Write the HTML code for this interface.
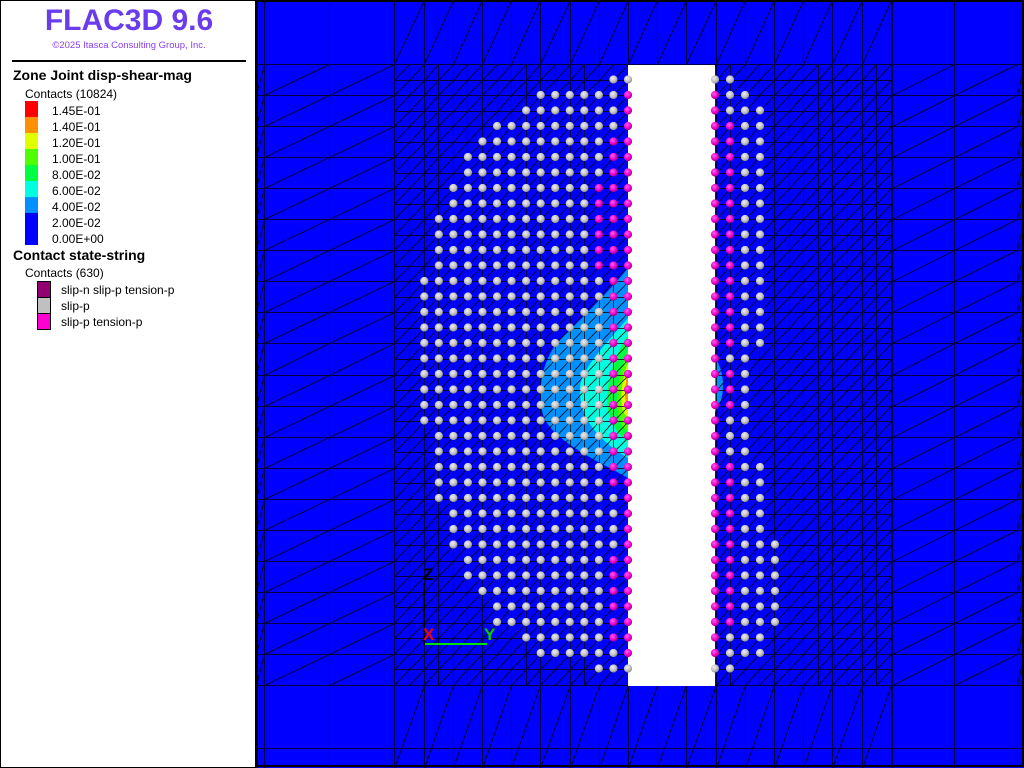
<!DOCTYPE html>
<html><head><meta charset="utf-8"><style>
html,body{margin:0;padding:0;width:1024px;height:768px;overflow:hidden;background:#fff;font-family:"Liberation Sans",sans-serif}
#panel{position:absolute;left:0;top:0;width:256px;height:768px;background:#fff;border:1px solid #000;box-sizing:border-box}
.t{position:absolute;white-space:nowrap;color:#000}
.sw{position:absolute;left:24px;width:13px;height:16px}
.sb{position:absolute;left:36px;width:12px;height:15px;border:1px solid #000}
#vp{position:absolute;left:256px;top:0}
</style></head><body>
<div id="panel">
<div class="t" style="left:0;width:256px;text-align:center;top:3px;font-size:30px;font-weight:bold;color:#6a3cf0;font-family:'Liberation Sans',sans-serif">FLAC3D 9.6</div>
<div class="t" style="left:0;width:256px;text-align:center;top:39px;font-size:9.5px;color:#8a40f0">©2025 Itasca Consulting Group, Inc.</div>
<div style="position:absolute;left:11px;top:59px;width:234px;height:2px;background:#000"></div>
<div class="t" style="left:12px;top:66px;font-size:14px;font-weight:bold">Zone Joint disp-shear-mag</div>
<div class="t" style="left:24px;top:86px;font-size:12px">Contacts (10824)</div>
<div class="sw" style="top:100px;background:#ff0000"></div>
<div class="sw" style="top:116px;background:#ff9000"></div>
<div class="sw" style="top:132px;background:#e0ff00"></div>
<div class="sw" style="top:148px;background:#50ff00"></div>
<div class="sw" style="top:164px;background:#00ff40"></div>
<div class="sw" style="top:180px;background:#00ffe0"></div>
<div class="sw" style="top:196px;background:#0090ff"></div>
<div class="sw" style="top:212px;background:#0000ff;height:32px"></div>
<div class="t" style="left:51px;top:102px;font-size:12px;line-height:16px">1.45E-01<br>1.40E-01<br>1.20E-01<br>1.00E-01<br>8.00E-02<br>6.00E-02<br>4.00E-02<br>2.00E-02<br>0.00E+00</div>
<div class="t" style="left:12px;top:246px;font-size:14px;font-weight:bold">Contact state-string</div>
<div class="t" style="left:24px;top:265px;font-size:12px">Contacts (630)</div>
<div class="sb" style="top:280px;background:#900070"></div>
<div class="sb" style="top:296px;background:#c0c0c0"></div>
<div class="sb" style="top:312px;background:#ff00d0"></div>
<div class="t" style="left:60px;top:281px;font-size:12px;line-height:16px">slip-n slip-p tension-p<br>slip-p<br>slip-p tension-p</div>
</div>
<svg id="vp" width="768" height="768" xmlns="http://www.w3.org/2000/svg">
<defs>
<radialGradient id="g" cx="0.4" cy="0.35" r="0.7"><stop offset="0" stop-color="#eeeeee"/><stop offset="0.6" stop-color="#c0c0c0"/><stop offset="1" stop-color="#808080"/></radialGradient>
<radialGradient id="m" cx="0.4" cy="0.35" r="0.7"><stop offset="0" stop-color="#ff60f0"/><stop offset="0.6" stop-color="#ee00c8"/><stop offset="1" stop-color="#900080"/></radialGradient>
</defs>
<rect x="0" y="0" width="768" height="768" fill="#0000ff"/>
<g transform="translate(-256,0)">
<path d="M628,268 C610,290 590,310 560,340 C540,360 536,400 545,420 C560,445 600,462 628,478 Z" fill="#0090ff"/>
<path d="M628,318 C605,345 585,365 580,385 C578,410 590,435 628,458 Z" fill="#00ffe0"/>
<path d="M628,335 C615,355 607,380 607,400 C608,420 615,432 628,442 Z" fill="#00ff40"/>
<path d="M628,350 C620,370 616,390 617,405 C618,420 622,428 628,432 Z" fill="#50ff00"/>
<path d="M628,362 C622,380 620,395 622,408 C624,415 628,418 628,418 Z" fill="#e0ff00"/>
<path d="M628,372 C625,385 624,395 626,403 L628,405 Z" fill="#ff9000"/>
<path d="M715,358 C724,370 726,392 718,408 L715,412 Z" fill="#0090ff"/>
</g>
<g id="mesh" stroke="#000000" stroke-width="1" fill="none" opacity="0.75" shape-rendering="crispEdges"></g>
<rect x="372" y="65" width="87" height="621" fill="#fff"/>
<g id="dots" transform="translate(-256,0)"></g>
<g transform="translate(-256,0)">
<text x="423" y="580" font-family="Liberation Sans" font-weight="bold" font-size="17" fill="#000">Z</text>
<rect x="423" y="583" width="2" height="62" fill="#000"/>
<rect x="425" y="643" width="62" height="2" fill="#00e000"/>
<text x="423" y="640" font-family="Liberation Sans" font-weight="bold" font-size="17" fill="#ff0000">X</text>
<text x="484" y="640" font-family="Liberation Sans" font-weight="bold" font-size="17" fill="#00d000">Y</text>
</g>
<rect x="1" y="1" width="766" height="765" fill="none" stroke="#000" stroke-width="2"/>
</svg>
<script>
(function(){
var ns="http://www.w3.org/2000/svg";
var mesh=document.getElementById('mesh'),dots=document.getElementById('dots');
var d="";
function L(x1,y1,x2,y2){d+="M"+(Math.round(x1)-256+0.5)+","+(Math.round(y1)+0.5)+"L"+(Math.round(x2)-256+0.5)+","+(Math.round(y2)+0.5);}
var fx=[],fy=[];
for(var i=0;i<=34;i++){fx.push(394.4+14.6*i);}
for(var j=0;j<=40;j++){fy.push(64+15.525*j);}
for(i=0;i<fx.length;i++)L(fx[i],64,fx[i],685);
for(j=0;j<fy.length;j++)L(394.4,fy[j],891.8,fy[j]);
var dd="";
for(i=0;i<fx.length-1;i++)for(j=0;j<fy.length-1;j++)L(fx[i],fy[j+1],fx[i+1],fy[j]);
var side=[[256,264],[264,329],[329,394.4],[891.8,954],[954,1017],[1017,1024]];
side.forEach(function(s){L(s[0],0,s[0],768);L(s[1],0,s[1],768);
 for(j=2;j<=40;j+=2){L(s[0],fy[j],s[1],fy[j]);L(s[0],fy[j],s[1],fy[j-2]);}
});
L(256,64,1024,64);L(256,748,1024,748);L(256,685,1024,685);
for(i=0;i<=34;i+=2){L(fx[i],0,fx[i],64);L(fx[i],685,fx[i],768);
 if(i<34){L(fx[i],64,fx[i+2],0);L(fx[i],768,fx[i+2],685);}}
var p=document.createElementNS(ns,'path');p.setAttribute('d',d);mesh.appendChild(p);
var lmin=[1,6,7,9,10,11,11,12,12,13,13,13,13,14,14,14,14,14,14,14,14,14,14,13,13,13,13,13,12,12,12,11,11,10,9,9,7,6,2];
var rmax=[1,2,3,3,3,3,3,3,3,3,3,3,3,3,3,3,3,3,2,2,2,2,2,2,2,3,3,3,3,3,4,4,4,4,4,4,3,3,1];
function dot(x,y,mag){var c=document.createElementNS(ns,'circle');c.setAttribute('cx',x);c.setAttribute('cy',y);c.setAttribute('r',4.1);c.setAttribute('fill',mag?'url(#m)':'url(#g)');dots.appendChild(c);}
for(var r=0;r<39;r++){var y=79.5+15.5*r;
 for(var k=0;k<=lmin[r];k++){var x=628-14.55*k;var mag=false;
  if(k==0)mag=(r>0&&r<38);
  else if(k==1)mag=(r>=4&&r<=26)||(r>=31&&r<=36);
  else if(k==2)mag=(r>=7&&r<=12);
  dot(x,y,mag);}
 for(k=0;k<=rmax[r];k++){var x2=715+15*k;var mg=false;
  if(k==0)mg=(r>0&&r<38);
  else if(k==1)mg=(r>=3&&r<=17)||(r>=19&&r<=21)||(r>=25&&r<=35);
  dot(x2,y,mg);}
}
})();
</script>
</body></html>
